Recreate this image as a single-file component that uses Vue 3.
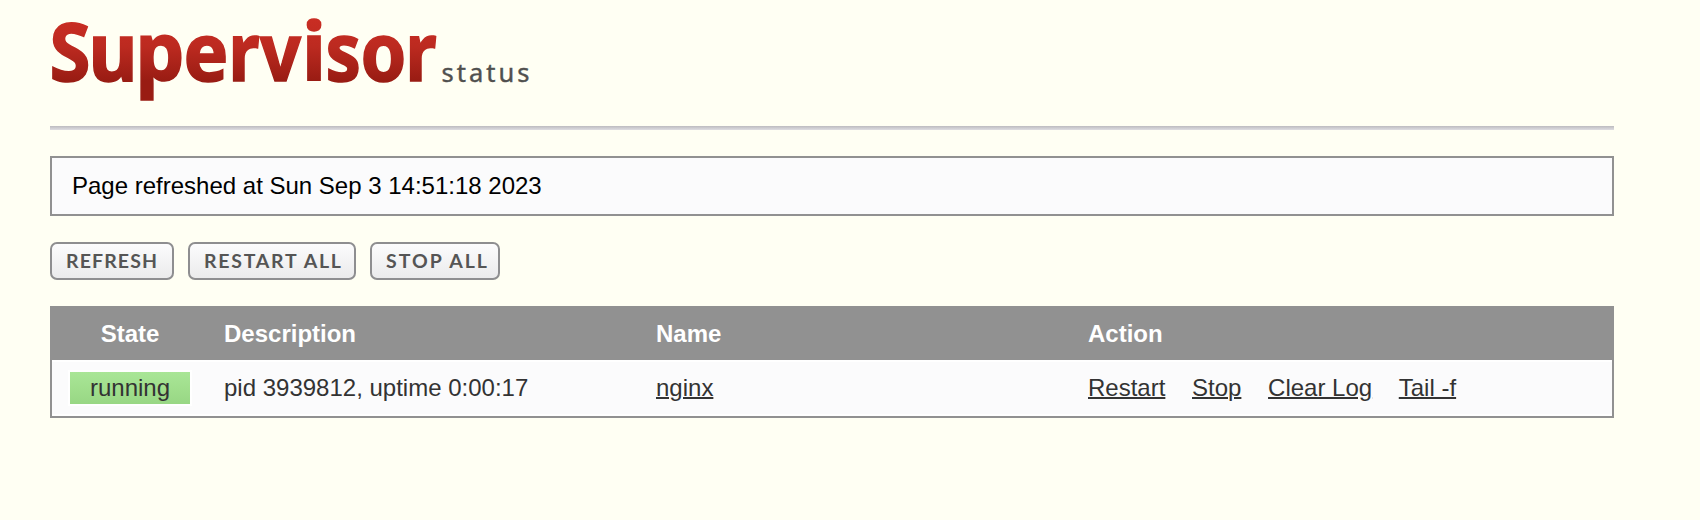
<script setup>
const letters = [
  { c: 'S', x: 49.5, w: 41 },
  { c: 'u', x: 88.5, w: 49 },
  { c: 'p', x: 135.5, w: 49 },
  { c: 'e', x: 183.5, w: 45 },
  { c: 'r', x: 228.5, w: 31 },
  { c: 'v', x: 260, w: 41 },
  { c: 'i', x: 302, w: 24 },
  { c: 's', x: 325.5, w: 35.5 },
  { c: 'o', x: 360.5, w: 46 },
  { c: 'r', x: 405.5, w: 31 },
]
const buttons = [
  { label: 'REFRESH', kind: 'refresh', len: 91 },
  { label: 'RESTART ALL', kind: 'restart', len: 137 },
  { label: 'STOP ALL', kind: 'stop', len: 101 },
]
const processes = [
  { state: 'running', description: 'pid 3939812, uptime 0:00:17', name: 'nginx' },
]
const actions = ['Restart', 'Stop', 'Clear Log', 'Tail -f']
</script>

<template>
  <div class="page">
    <header class="header">
      <svg class="logo" width="500" height="120" viewBox="50 0 500 120">
        <defs>
          <linearGradient id="red" gradientUnits="userSpaceOnUse" x1="0" y1="20" x2="0" y2="96">
            <stop offset="0" stop-color="#c92d23" />
            <stop offset="0.35" stop-color="#bc2a20" />
            <stop offset="0.8" stop-color="#991c13" />
            <stop offset="1" stop-color="#991c13" />
          </linearGradient>
        </defs>
        <text
          v-for="(l, i) in letters"
          :key="i"
          class="brand"
          :x="l.x"
          y="81"
          :textLength="l.w"
          lengthAdjust="spacingAndGlyphs"
          fill="url(#red)"
          stroke="url(#red)"
        >{{ l.c }}</text>
        <text class="sub" x="441.5" y="82" textLength="88">status</text>
      </svg>
    </header>
    <div class="notice">Page refreshed at Sun Sep 3 14:51:18 2023</div>
    <div class="buttons">
      <button v-for="b in buttons" :key="b.kind" class="btn" :class="b.kind">
        <svg :width="b.len" height="28">
          <text class="caption" x="0" y="21" :textLength="b.len">{{ b.label }}</text>
        </svg>
      </button>
    </div>
    <div class="table">
      <div class="row head">
        <span class="state">State</span>
        <span>Description</span>
        <span>Name</span>
        <span>Action</span>
      </div>
      <div v-for="p in processes" :key="p.name" class="row body">
        <span class="state badge">{{ p.state }}</span>
        <span>{{ p.description }}</span>
        <span><a>{{ p.name }}</a></span>
        <span class="actions"><a v-for="a in actions" :key="a">{{ a }}</a></span>
      </div>
    </div>
  </div>
</template>

<style>
body {
  background: #fffff3;
}
</style>

<style scoped>
.page {
  box-sizing: border-box;
  width: 1700px;
  height: 520px;
  padding: 0 86px 0 50px;
  background: #fffff3;
  font: 24px/28px "Liberation Sans", Arial, sans-serif;
  color: #333;
}
.header {
  box-sizing: border-box;
  height: 130px;
  background: linear-gradient(#bcbbbf, #dedde1) bottom / 100% 4px no-repeat;
}
.logo {
  display: block;
  overflow: visible;
}
.brand {
  font: 700 80.5px "Noto Sans", sans-serif;
  stroke-width: 1.6px;
}
.sub {
  font: 400 25.5px "Noto Sans", sans-serif;
  fill: #50504e;
  stroke: #50504e;
  stroke-width: 0.4px;
}
.notice {
  box-sizing: border-box;
  height: 60px;
  margin-top: 26px;
  padding: 14px 20px;
  border: 2px solid #919191;
  background: #fbfbfc;
  color: #000;
}
.buttons {
  display: flex;
  gap: 14px;
  margin-top: 26px;
}
.btn {
  box-sizing: border-box;
  height: 38px;
  padding: 0 0 0 14px;
  border: 2px solid #8e8e90;
  border-radius: 7px;
  background: linear-gradient(#fcfcfd, #ebebec);
  text-align: left;
}
.btn svg {
  display: block;
  overflow: visible;
}
.refresh { width: 124px; }
.restart { width: 168px; }
.stop { width: 130px; }
.caption {
  font: 700 19.5px Lato, sans-serif;
  fill: #555;
}
.table {
  box-sizing: border-box;
  height: 112px;
  margin-top: 26px;
  border: 2px solid #919191;
}
.row {
  display: grid;
  box-sizing: border-box;
  grid-template-columns: 120px 432px 432px 1fr;
  padding-left: 18px;
}
.row > span:nth-child(n + 2) {
  padding-left: 34px;
}
.head {
  height: 52px;
  padding-top: 12px;
  background: #919191;
  color: #fff;
  font-weight: 700;
}
.body {
  height: 56px;
  padding-top: 12px;
  border-top: 2px solid #fff;
  border-bottom: 2px solid #fff;
  background: #fbfbfc;
}
.body > span {
  height: 32px;
}
.state {
  text-align: center;
}
.body > .badge {
  margin-top: -2px;
  line-height: 32px;
  background: linear-gradient(#a9e696, #98d784);
  box-shadow: 0 0 0 2px #fff;
}
.body a {
  text-decoration: underline;
  text-decoration-thickness: 2px;
}
.actions {
  display: flex;
  gap: 26.67px;
}
</style>
